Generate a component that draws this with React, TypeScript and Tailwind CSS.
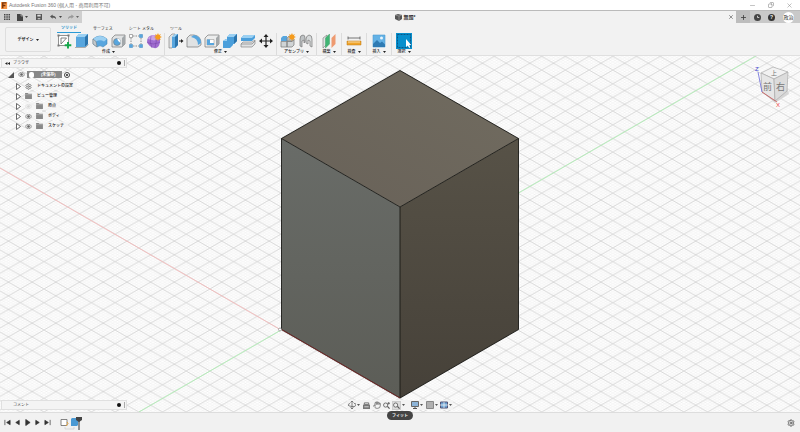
import type { ReactNode } from "react";
import { Settings, Hand, Minus, X, Plus, Copy } from "lucide-react";

const ico = "h-4 w-4 shrink-0";

const Arrow = () => (
  <svg viewBox="0 0 3 2" className="h-[2px] w-[3px] shrink-0"><path d="M0 0h3L1.500 2z" fill="currentColor" /></svg>
);

/* Toolbar icons, all on a 16 x 16 grid */
const Sketch = () => (
  <svg viewBox="0 0 16 16" className={ico} fill="none">
    <path d="M2.500 2.500h10v10h-10z" fill="#fff" stroke="#666" strokeWidth=".7" />
    <path d="M5 5h5.500M5 5v6l5.500-6" stroke="#666" strokeWidth=".8" />
    <path d="M1.500 1.500h2v2h-2zM11.500 1.500h2v2h-2zM1.500 11.500h2v2h-2z" fill="#777" />
    <path d="M12 9v6.500M8.700 12.200h6.600" stroke="#15a64a" strokeWidth="1.900" />
  </svg>
);
const Extrude = () => (
  <svg viewBox="0 0 16 16" className={ico}>
    <path d="M2 4l3-3h9v10l-3 3H2z" fill="#58a6de" />
    <path d="M2 4l3-3h9l-3 3z" fill="#9bd0f2" />
    <path d="M11 4l3-3v10l-3 3z" fill="#2c75ad" />
    <path d="M1 14.500h10.500l3-3" stroke="#999" strokeWidth=".8" fill="none" />
  </svg>
);
const Revolve = () => (
  <svg viewBox="0 0 16 16" className={ico}>
    <path d="M1 6q7-6 14 0v5l-4 3q-3-2.500-6 0l-4-3z" fill="#58a6de" stroke="#3279ab" strokeWidth=".5" />
    <path d="M1 6q7-6 14 0l-3 2.500q-4-2.500-8 0z" fill="#9bd0f2" />
    <path d="M1 6l3 2.500L5 14l-4-3z" fill="#c4cacd" stroke="#777" strokeWidth=".5" />
  </svg>
);
const Hole = () => (
  <svg viewBox="0 0 16 16" className={ico}>
    <path d="M2 5l3-3h10v9l-3 3H2z" fill="#e0e2e3" stroke="#777" strokeWidth=".7" />
    <path d="M12 5l3-3v9l-3 3z" fill="#a2a7aa" />
    <circle cx="7" cy="9" r="3.500" fill="#58a6de" stroke="#777" strokeWidth=".6" />
    <path d="M7 5.500q4 0 3.500 4.500Q8 9 7 5.500z" fill="#fff" />
  </svg>
);
const Pattern = () => (
  <svg viewBox="0 0 16 16" className={ico}>
    <path d="M5 3h6M3 5v6M5 13h6M13 5v6" stroke="#777" strokeWidth=".8" strokeDasharray="1.500 1" />
    <path d="M1.500 1.500h3v3h-3z" fill="#fff" stroke="#777" strokeWidth=".6" />
    <path d="M11.500 1.500h3v3h-3zM1.500 11.500h3v3h-3zM11.500 11.500h3v3h-3z" fill="#58a6de" stroke="#3b86bf" strokeWidth=".5" />
  </svg>
);
const Burst = () => (
  <path d="M12 0l.9 2 2-1-1 2 2 1-2 1 1 2-2-1-.9 2-1-2-2 1 1-2-2-1 2-1-1-2 2 1z" fill="#f59b1c" />
);
const Form = () => (
  <svg viewBox="0 0 16 16" className={ico}>
    <path d="M1 9q0-7 7-7t6 7-6 6-7-6z" fill="#a06dd0" />
    <path d="M2 6q2-4 6-4t5 4L8 7.500z" fill="#c9a2e8" />
    <path d="M5 3Q3 9 6 15M10 2.500q1 6-1 12M1 9.500q6 3 13 0" stroke="#7440a4" strokeWidth=".5" fill="none" />
    <Burst />
  </svg>
);
const PressPull = () => (
  <svg viewBox="0 0 16 16" className={ico}>
    <path d="M1 4l3-3h3v10l-3 4H1z" fill="#e0e2e3" stroke="#777" strokeWidth=".6" />
    <path d="M4 4l3-3h3v11l-3 3H4z" fill="#58a6de" />
    <path d="M4 4l3-3h3L7 4z" fill="#9bd0f2" />
    <path d="M7 4l3-3v11l-3 3z" fill="#2c75ad" />
    <path d="M11 7.500h2V6l2.500 2L13 10V8.500h-2z" fill="#222" />
  </svg>
);
const Fillet = () => (
  <svg viewBox="0 0 16 16" className={ico}>
    <path d="M1 5l3-3h4q7 1 7 8v2l-3 2H1z" fill="#e0e2e3" stroke="#777" strokeWidth=".7" />
    <path d="M5 4l3-2q7 1 7 8l-3 2q0-7-7-8z" fill="#58a6de" />
  </svg>
);
const Shell = () => (
  <svg viewBox="0 0 16 16" className={ico}>
    <path d="M1 5l3-3h11v9l-3 3H1z" fill="#eceded" stroke="#777" strokeWidth=".7" />
    <path d="M12 5l3-3v9l-3 3z" fill="#a4a8aa" />
    <path d="M3 6.500h7V12H3z" fill="#fff" stroke="#888" strokeWidth=".5" />
    <path d="M3 6.500h3V10h4v2H3z" fill="#58a6de" />
  </svg>
);
const Combine = () => (
  <svg viewBox="0 0 16 16" className={ico}>
    <path d="M5 4l3-3h7v7l-3 3h-1v1l-3 3H1V8l3-2h1z" fill="#4b9fdb" />
    <path d="M5 4l3-3h7l-3 3zM1 8l3-2h1v2z" fill="#9bd0f2" />
    <path d="M12 4l3-3v7l-3 3z" fill="#2c75ad" />
  </svg>
);
const Offset = () => (
  <svg viewBox="0 0 16 16" className={ico}>
    <path d="M1 5l3-3h11v3l-3 3H1z" fill="#4b9fdb" />
    <path d="M1 5l3-3h11l-3 3z" fill="#9bd0f2" />
    <path d="M1 11l2-2h9l3-2v4l-3 3H1z" fill="#e0e2e3" stroke="#777" strokeWidth=".6" />
    <path d="M1 11h11l3-3" stroke="#777" strokeWidth=".6" fill="none" />
  </svg>
);
const MoveIcon = () => (
  <svg viewBox="0 0 16 16" className={ico}>
    <path d="M8 3v10M3 8h10" stroke="#222" strokeWidth="1.200" />
    <path d="M8 1l2.500 3h-5zM8 15l2.500-3h-5zM1 8l3-2.500v5zM15 8l-3-2.500v5z" fill="#222" />
  </svg>
);
const Component = () => (
  <svg viewBox="0 0 16 16" className={ico}>
    <path d="M1 5l2-2h4v5H1z" fill="#58a6de" />
    <path d="M1 8.500h6V14H1zM7 8.500h5l2-2V12l-2 2H7z" fill="#d0d4d6" stroke="#777" strokeWidth=".7" />
    <path d="M7 5l2-2h4v5H7z" fill="#b9c0c4" stroke="#777" strokeWidth=".6" />
    <Burst />
  </svg>
);
const Joint = () => (
  <svg viewBox="0 0 16 16" className={ico}>
    <path d="M2 13V6q0-4 3-4 2 0 2 3v4l-1 1V7L4 8v6z" fill="#bfc3c5" stroke="#777" strokeWidth=".7" />
    <path d="M14 14V6q0-4-3-4-3 1-3 4v4l2 1V7l2 1v5z" fill="#d7dadb" stroke="#777" strokeWidth=".7" />
  </svg>
);
const Plane = () => (
  <svg viewBox="0 0 16 16" className={ico}>
    <path d="M2 5l4-3v9l-4 4z" fill="#e0e2e3" stroke="#777" strokeWidth=".6" />
    <path d="M4.500 5l4-4v10l-4 4z" fill="#3fb573" stroke="#2c9158" strokeWidth=".4" />
    <path d="M10.500 5l4-4v10l-4 4z" fill="#ee9a70" />
  </svg>
);
const Measure = () => (
  <svg viewBox="0 0 16 16" className={ico}>
    <path d="M2 3.500v3M14 3.500v3M2 5h12" stroke="#555" strokeWidth=".8" />
    <path d="M1 8h14v4H1z" fill="#f0a52b" stroke="#b87516" strokeWidth=".5" />
    <path d="M3 8v2M5 8v2M7 8v2M9 8v2M11 8v2M13 8v2" stroke="#fff" strokeWidth=".6" />
  </svg>
);
const Picture = () => (
  <svg viewBox="0 0 16 16" className={ico}>
    <path d="M2 2h12v12H2z" fill="#64b2e6" stroke="#4d9bd0" strokeWidth=".6" />
    <path d="M2 11l4-4 3 3 2-1.500 3 3V14H2z" fill="#2f7bb4" />
    <circle cx="10.500" cy="5" r="1.500" fill="#e9f5fc" />
  </svg>
);
const Select = () => (
  <svg viewBox="0 0 16 16" className="h-4 w-4">
    <path d="M1.500 1.500h13v13h-13z" fill="none" stroke="#0a4a75" strokeDasharray="2 1" strokeWidth=".8" />
    <path d="M10 6v8l1.800-1.500L13 15l1.300-.6-1.100-2.400h2z" fill="#fff" />
  </svg>
);

type Tool = { name: string; icon: ReactNode };
const groups: { label: string; tools: Tool[]; width: string }[] = [
  {
    label: "作成", width: "w-[111px]",
    tools: [
      { name: "スケッチを作成", icon: <Sketch /> }, { name: "押し出し", icon: <Extrude /> },
      { name: "回転", icon: <Revolve /> }, { name: "穴", icon: <Hole /> },
      { name: "パターン", icon: <Pattern /> }, { name: "フォームを作成", icon: <Form /> },
    ],
  },
  {
    label: "修正", width: "w-[111px]",
    tools: [
      { name: "プレス/プル", icon: <PressPull /> }, { name: "フィレット", icon: <Fillet /> },
      { name: "シェル", icon: <Shell /> }, { name: "結合", icon: <Combine /> },
      { name: "面をオフセット", icon: <Offset /> }, { name: "移動", icon: <MoveIcon /> },
    ],
  },
  { label: "アセンブリ", width: "w-[39px]", tools: [{ name: "コンポーネント", icon: <Component /> }, { name: "ジョイント", icon: <Joint /> }] },
  { label: "構築", width: "w-6", tools: [{ name: "平面", icon: <Plane /> }] },
  { label: "検査", width: "w-6", tools: [{ name: "計測", icon: <Measure /> }] },
  { label: "挿入", width: "w-6", tools: [{ name: "画像", icon: <Picture /> }] },
];

const Sep = () => <div className="h-[22px] w-px shrink-0 bg-[#dcdcdc]" />;

function TitleBar() {
  return (
    <header className="flex h-[10px] shrink-0 items-center bg-white pl-px text-[5px] text-[#777]">
      <svg viewBox="0 0 8 8" className="h-[7px] w-[7px]">
        <path d="M0 0h7v8H0z" fill="#f79646" />
        <path d="M2 7V1h4M2 4h3" stroke="#743008" strokeWidth="1.500" fill="none" />
      </svg>
      <h1 className="ml-px whitespace-nowrap leading-none">Autodesk Fusion 360 (個人用 - 商用利用不可)</h1>
      <div className="ml-auto mr-[7px] flex gap-3 text-[#777]">
        <button aria-label="最小化"><Minus size={7} strokeWidth={1.5} /></button>
        <button aria-label="元のサイズに戻す"><Copy size={6} className="-scale-x-100" /></button>
        <button aria-label="閉じる"><X size={7} strokeWidth={1.5} /></button>
      </div>
    </header>
  );
}

function TabBar() {
  return (
    <div className="flex h-[13px] shrink-0 border-t border-[#bbb] bg-[#f2f2f2]">
      <div className="flex w-[82px] items-center bg-[#cfcfcf] pl-1 text-[#444]">
        <button aria-label="データパネル">
          <svg viewBox="0 0 6 6" className="h-[6px] w-[6px]" fill="#444">
            <path d="M0 0h1.500v1.500H0zM2.300 0h1.500v1.500H2.300zM4.500 0H6v1.500H4.500zM0 2.300h1.500v1.500H0zM2.300 2.300h1.500v1.500H2.300zM4.500 2.300H6v1.500H4.500zM0 4.500h1.500V6H0zM2.300 4.500h1.500V6H2.300zM4.500 4.500H6V6H4.500z" />
          </svg>
        </button>
        <button aria-label="ファイル" className="ml-[7px] flex items-center gap-0.5">
          <svg viewBox="0 0 6 7" className="h-[7px] w-[6px]"><path d="M0 0h4l2 2v5H0z" fill="#444" /><path d="M4 0v2h2" stroke="#ccc" strokeWidth=".6" fill="none" /></svg>
          <Arrow />
        </button>
        <button aria-label="保存" className="ml-2">
          <svg viewBox="0 0 7 7" className="h-[6px] w-[6px]"><path d="M0 0h7v7H0z" fill="#555" /><path d="M1.500 1h4v2h-4zM2 5h3v1H2z" fill="#ddd" /></svg>
        </button>
        <button aria-label="元に戻す" className="ml-2 flex items-center gap-[2px]">
          <svg viewBox="0 0 8 6" className="h-[6px] w-[7px]"><path d="M0 2.500L3 0v1.500q4 0 4 4Q6 3.500 3 3.500V5z" fill="#555" /></svg>
          <Arrow />
        </button>
        <button aria-label="やり直し" className="ml-[5px] flex items-center gap-[2px] text-[#666]">
          <svg viewBox="0 0 8 6" className="h-[6px] w-[7px]"><path d="M8 2.500L5 0v1.500q-4 0-4 4 1-2 4-2V5z" fill="#999" /></svg>
          <Arrow />
        </button>
      </div>
      <div className="flex flex-1 items-center justify-center gap-[2px] text-[5px] font-bold text-[#333]">
        <svg viewBox="0 0 7 7" className="h-[7px] w-[7px]"><path d="M0 1l3-1 4 1v4L4 7 0 5z" fill="#555" /><path d="M0 1l4 1 3-1M4 2v5" stroke="#bbb" strokeWidth=".5" fill="none" /></svg>
        <span className="leading-none">無題*</span>
      </div>
      <button aria-label="タブを閉じる" className="mr-[2px] text-[#333]"><X size={6} /></button>
      <div className="flex w-16 items-center bg-[#c9c9c9] text-[#444]">
        <button aria-label="新規" className="flex h-full w-[14px] shrink-0 items-center justify-center bg-[#bdbdbd]"><Plus size={7} strokeWidth={3} /></button>
        <button aria-label="ジョブの状態" className="ml-[4px]">
          <svg viewBox="0 0 8 8" className="h-[7px] w-[7px]"><circle cx="4" cy="4" r="4" fill="#444" /><path d="M4 2v2h2" stroke="#ddd" fill="none" /></svg>
        </button>
        <button aria-label="ヘルプ" className="ml-[7px] flex h-[7px] w-[7px] items-center justify-center rounded-full bg-[#333] text-[5px] font-bold leading-none text-white">?</button>
        <button className="ml-2 flex h-[11px] w-[11px] shrink-0 items-center justify-center whitespace-nowrap rounded-full bg-white text-[5px] leading-none text-[#222]">政治</button>
      </div>
    </div>
  );
}

function Toolbar() {
  const tabs = ["ソリッド", "サーフェス", "シート メタル", "ツール"];
  return (
    <div className="flex h-[33px] shrink-0 border-b border-[#e0e0e0] bg-[#f2f2f2] pl-[5px] text-[#222]">
      <button className="mt-1 flex h-[25px] w-[46px] items-center justify-center gap-0.5 rounded-xs border border-[#dedede] text-[4px] font-bold">
        デザイン <Arrow />
      </button>
      <div className="ml-[2px] flex-1">
        <nav className="flex h-[10px] gap-2 pl-1 text-[4px] leading-[9px]">
          {tabs.map((t, i) => (
            <button key={t} className={`whitespace-nowrap px-1 ${i === 0 ? "border-b border-[#2a9ad6] font-bold text-[#168bc7]" : ""}`}>
              {t}
            </button>
          ))}
        </nav>
        <div className="flex items-center">
          {groups.map((g) => (
            <div key={g.label} className="flex items-center">
              <div className={`flex flex-col items-center ${g.width}`}>
                <div className="flex h-4 items-center gap-[2px]">
                  {g.tools.map((t) => <button key={t.name} aria-label={t.name}>{t.icon}</button>)}
                </div>
                <button className="flex items-center gap-0.5 whitespace-nowrap text-[4px] font-medium leading-[6px]">{g.label}<Arrow /></button>
              </div>
              <Sep />
            </div>
          ))}
          <div className="flex w-6 flex-col items-center">
            <button aria-label="選択ツール" className="flex h-4 w-4 items-center bg-[#078fcd]"><Select /></button>
            <button className="flex items-center gap-0.5 text-[4px] font-medium leading-[6px]">選択<Arrow /></button>
          </div>
        </div>
      </div>
    </div>
  );
}

function Scene() {
  return (
    <svg viewBox="0 0 800 356" preserveAspectRatio="xMidYMid slice" className="absolute inset-0 h-full w-full">
      <defs>
        <pattern id="minor" x="281" y="274" width="4.740" height="2.736" patternUnits="userSpaceOnUse">
          <path d="M0 0l4.740 2.736M0 2.736L4.740 0" stroke="#e6e6e6" strokeWidth=".4" />
        </pattern>
        <pattern id="major" x="281" y="274" width="23.700" height="13.680" patternUnits="userSpaceOnUse">
          <path d="M0 0l23.700 13.680M0 13.680L23.700 0" stroke="#c6c6c6" strokeWidth=".6" />
        </pattern>
        <linearGradient id="top" x1="0" y1="1" x2="1" y2="0"><stop stopColor="#686158" /><stop offset="1" stopColor="#716c60" /></linearGradient>
        <linearGradient id="left" x1="0" y1="0" x2="0" y2="1"><stop stopColor="#696c68" /><stop offset="1" stopColor="#5c5d57" /></linearGradient>
        <linearGradient id="right" x1="0" y1="0" x2="0" y2="1"><stop stopColor="#575247" /><stop offset="1" stopColor="#464139" /></linearGradient>
      </defs>
      <path d="M0 0h800v356H0z" fill="#fff" />
      <path d="M0 0h800v356H0z" fill="url(#minor)" />
      <path d="M0 0h800v356H0z" fill="url(#major)" />
      <path d="M0 112l281 162" stroke="#f6b5b5" strokeWidth=".8" />
      <path d="M139 356L756 0" stroke="#a9f0ae" strokeWidth=".8" />
      <path d="M400 14.500l118.500 68L400 151 281.500 82.500z" fill="url(#top)" />
      <path d="M281.500 82.500L400 151v191l-118.500-68.500z" fill="url(#left)" />
      <path d="M518.500 82.500L400 151v191l118.500-68.500z" fill="url(#right)" />
      <path d="M400 14.500l118.500 68v191L400 342l-118.500-68.500v-191zM281.500 82.500L400 151l118.500-68.500M400 151v191" fill="none" stroke="#181815" strokeWidth=".9" />
      <path d="M281.500 273.500L400 342" stroke="#8e2525" strokeWidth=".7" />
      <circle cx="280" cy="273.500" r="1.500" fill="#fff" stroke="#777" strokeWidth=".6" />
    </svg>
  );
}

function ViewCube() {
  return (
    <svg viewBox="0 0 40 44" className="absolute right-[7px] top-2 h-11 w-10">
      <path d="M9 28l13 11 14-9-2-6z" fill="#d6d6d6" />
      <path d="M8 9l12-6 15 5-14 7z" fill="#f2f2f2" stroke="#aaa" strokeWidth=".7" />
      <path d="M8 9l13 6 1 22L9 28z" fill="#e6e6e6" stroke="#aaa" strokeWidth=".7" />
      <path d="M21 15l14-7-1 19-12 10z" fill="#dcdcdc" stroke="#aaa" strokeWidth=".7" />
      <path d="M5 8l4 20" stroke="#6868d8" strokeWidth=".8" />
      <path d="M9 28l15 10" stroke="#cc5555" strokeWidth=".8" />
      <g fontSize="9" fill="#777">
        <text x="10" y="26">前</text>
        <text x="23" y="26">右</text>
        <text x="18" y="11" fontSize="6">上</text>
      </g>
      <text x="2" y="7" fontSize="6" fill="#4444d5">Z</text>
      <text x="23" y="43" fontSize="6" fill="#e44">X</text>
    </svg>
  );
}

const Eye = ({ dim = false }) => (
  <svg viewBox="0 0 8 6" className={`h-[5px] w-[7px] ${dim ? "opacity-20" : ""}`}>
    <path d="M0 3q4-6 8 0-4 6-8 0z" fill="#ddd" stroke="#777" strokeWidth=".8" />
    <circle cx="4" cy="3" r="1.500" fill="#666" />
  </svg>
);
const Folder = () => <svg viewBox="0 0 8 7" className="h-[6px] w-[7px]"><path d="M0 0h3l1 1h4v6H0z" fill="#888" /><path d="M0 2h8" stroke="#ccc" strokeWidth=".5" /></svg>;
const Expand = () => <svg viewBox="0 0 5 7" className="h-[7px] w-[5px]"><path d="M.5.5l4 3-4 3z" fill="#fff" stroke="#444" strokeWidth=".8" /></svg>;

const rows = [
  { label: "ドキュメントの設定", icon: <Settings size={7} strokeWidth={3} />, eye: "" },
  { label: "ビュー管理", icon: <Folder />, eye: "" },
  { label: "原点", icon: <Folder />, eye: "off" },
  { label: "ボディ", icon: <Folder />, eye: "on" },
  { label: "スケッチ", icon: <Folder />, eye: "on" },
];

function PanelHead({ label, back = false }: { label: string; back?: boolean }) {
  return (
    <div className="flex h-[10px] w-[126px] items-center border border-[#e0e0e0] bg-[#f4f4f4] pl-[3px] text-[4px] leading-none text-[#444]">
      <span className="w-2">
        {back && <svg viewBox="0 0 5 3" className="h-[3px] w-[5px]"><path d="M2.400 0v3L0 1.500zM5 0v3L2.600 1.500z" fill="#222" /></svg>}
      </span>
      <span>{label}</span>
      <button aria-label={`${label}の設定`} className="ml-auto mr-[3px] h-1 w-1 rounded-full bg-[#111]" />
      <span className="mr-px h-[6px] w-px bg-[#aaa]" />
    </div>
  );
}

function Browser() {
  return (
    <aside className="absolute left-px top-[2px] text-[4px] leading-none text-[#222]">
      <PanelHead label="ブラウザ" back />
      <div className="flex h-[13px] items-center pl-[7px]">
        <svg viewBox="0 0 6 6" className="h-[6px] w-[6px]"><path d="M6 0v6H0z" fill="#555" /></svg>
        <span className="ml-1"><Eye /></span>
        <div className="ml-[2px] flex h-[7px] w-[35px] items-center gap-[7px] bg-[#888] pl-[2px] font-bold text-white">
          <span className="h-[6px] w-[5px] rounded-xs bg-white" />
          (未保存)
        </div>
        <span className="ml-[2px] flex h-[6px] w-[6px] items-center justify-center rounded-full border border-[#444] bg-white"><span className="h-[2px] w-[2px] rounded-full bg-[#222]" /></span>
      </div>
      <ul>
        {rows.map((r) => (
          <li key={r.label} className="flex h-[10px] items-center pl-[15px]">
            <button aria-label={`${r.label}を展開`}><Expand /></button>
            <div className="ml-1 flex items-center gap-[4px] bg-[#f5f5f5]/80">
              {r.eye && <Eye dim={r.eye === "off"} />}
              <span className="text-[#777]">{r.icon}</span>
              <span className="py-[2px] pl-px pr-1 font-medium">{r.label}</span>
            </div>
          </li>
        ))}
      </ul>
    </aside>
  );
}

const Lens = ({ mark = false }) => (
  <svg viewBox="0 0 8 8" className="h-[7px] w-[7px]" fill="none" stroke="#555" strokeWidth=".9">
    <circle cx="3" cy="3.500" r="2.400" fill="#eee" /><path d="M5 5l2.500 2.500" strokeWidth="1.400" />
    {mark && <path d="M6.500 0v3M5 1.500h3" />}
  </svg>
);

function NavBar() {
  return (
    <div className="absolute bottom-[2px] left-1/2 flex h-[10px] w-[106px] -translate-x-1/2 items-center justify-between bg-[#f3f3f3] px-px text-[#555]">
      <button aria-label="オービット" className="flex items-center gap-px">
        <svg viewBox="0 0 8 8" className="h-2 w-2" fill="none" stroke="#666" strokeWidth=".8"><path d="M2 2.500Q0 3 0 4t4 1.500T8 4 6 2.500M4 0v8M2.500 1.500L4 0l1.500 1.500M2.500 6.500L4 8l1.500-1.500" /></svg><Arrow />
      </button>
      <button aria-label="ビュー正面" className="ml-px"><svg viewBox="0 0 8 8" className="h-[7px] w-[7px]"><path d="M1.500 1h5v2h-5z" fill="none" stroke="#666" /><path d="M0 3h8v5H0z" fill="#777" /><path d="M1.500 5h5v1h-5z" fill="#ddd" /></svg></button>
      <button aria-label="画面移動"><Hand size={8} /></button>
      <button aria-label="ズーム"><Lens mark /></button>
      <button aria-label="フィット" className="flex items-center gap-px"><span className="border border-[#ccc] bg-[#dcdcdc]"><Lens /></span><Arrow /></button>
      <button aria-label="表示設定" className="ml-1 flex items-center gap-px"><svg viewBox="0 0 8 8" className="h-2 w-2"><path d="M.5.5h7v5h-7z" fill="#8db4d8" stroke="#666" /><path d="M2 7.500h4M4 6v1" stroke="#555" /></svg><Arrow /></button>
      <button aria-label="グリッド" className="flex items-center gap-px"><svg viewBox="0 0 8 8" className="h-2 w-2"><path d="M.5.5h7v7h-7z" fill="#b0b0b0" stroke="#888" /></svg><Arrow /></button>
      <button aria-label="ビューポート" className="flex items-center gap-px"><svg viewBox="0 0 8 8" className="h-2 w-2"><path d="M.5 1h7v6h-7z" fill="#6da1d2" stroke="#557" /><path d="M4 1v6M0 4h8" stroke="#fff" strokeWidth=".7" /></svg><Arrow /></button>
    </div>
  );
}

const playback = [
  { name: "最初へ", d: "M1 1v6M7 1.500L3 4l4 2.500z" },
  { name: "前へ", d: "M6 1.500L2 4l4 2.500z" },
  { name: "再生", d: "M2 .5L7 4 2 7.500z" },
  { name: "次へ", d: "M2 1.500L6 4 2 6.500z" },
  { name: "最後へ", d: "M1 1.500L5 4 1 6.500zM7 1v6" },
];

function Timeline() {
  return (
    <footer className="flex h-5 shrink-0 items-center border-t border-[#ddd] bg-[#f1f1f1] pl-1 text-[#333]">
      <div className="flex gap-[3px]">
        {playback.map((p) => (
          <button key={p.name} aria-label={p.name}><svg viewBox="0 0 8 8" className="h-[7px] w-[7px]"><path d={p.d} fill="#333" stroke="#333" strokeWidth=".8" /></svg></button>
        ))}
      </div>
      <svg viewBox="0 0 24 16" className="ml-[9px] h-4 w-6">
        <path d="M1 4.500h6v6H1z" fill="#fff" stroke="#666" strokeWidth=".8" />
        <path d="M7 7l1 1.500L6 11" stroke="#e4a33b" fill="none" />
        <path d="M11 4l1-1h6v7l-1 1h-6z" fill="#4b9ad4" />
        <path d="M5 12v2h9v-2" stroke="#ccc" strokeWidth=".7" fill="none" />
        <path d="M16 2h6v3l-3 2-3-2z" fill="#444" /><path d="M19 6v9" stroke="#333" />
      </svg>
      <button aria-label="設定" className="ml-auto mr-[5px] text-[#666]"><Settings size={8} strokeWidth={3} /></button>
    </footer>
  );
}

export default function App() {
  return (
    <div className="flex h-screen flex-col overflow-hidden bg-[#f2f2f2] font-['Liberation_Sans','Noto_Sans_CJK_JP',sans-serif]">
      <TitleBar />
      <TabBar />
      <Toolbar />
      <main className="relative min-h-0 flex-1">
        <Scene />
        <Browser />
        <ViewCube />
        <div className="absolute bottom-[2px] left-px"><PanelHead label="コメント" /></div>
        <NavBar />
        <div role="tooltip" className="absolute -bottom-2 left-1/2 z-10 flex h-[9px] w-[26px] -translate-x-1/2 items-center justify-center rounded-full bg-[#444] text-[4px] font-bold leading-none text-white">フィット</div>
      </main>
      <Timeline />
    </div>
  );
}
